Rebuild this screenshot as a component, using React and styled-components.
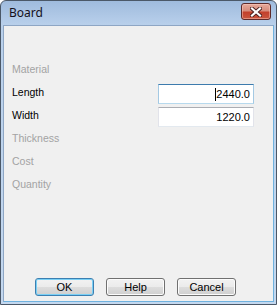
import React from 'react';
import styled, { createGlobalStyle } from 'styled-components';

const GlobalStyle = createGlobalStyle`
  html, body {
    margin: 0;
    padding: 0;
    background: #ffffff;
  }
`;

const Frame = styled.div`
  box-sizing: border-box;
  width: 277px;
  height: 305px;
  display: flex;
  flex-direction: column;
  border: 1px solid #4b5868;
  border-radius: 6px 6px 0 0;
  background: linear-gradient(to bottom, #9fbbdd 0px, #b9d0eb 24px, #c4d8ef 100%);
  padding: 0 2px 2px 2px;
  font-family: "Liberation Sans", Arial, sans-serif;
  font-size: 11px;
`;

const TitleBar = styled.div`
  height: 24px;
  display: flex;
  align-items: center;
  justify-content: space-between;
  padding: 0 3px 0 6px;
`;

const Title = styled.span`
  font-family: "Noto Sans", "Liberation Sans", sans-serif;
  font-size: 12px;
  color: #14101c;
  margin-top: -1px;
`;

const CloseButton = styled.div`
  box-sizing: border-box;
  width: 30px;
  height: 17px;
  margin-top: -3px;
  border: 1px solid #5d2a2a;
  border-radius: 3px;
  background: linear-gradient(to bottom, #e6a99b 0%, #d68c7c 45%, #c2402c 55%, #c9563f 100%);
  box-shadow: inset 0 0 0 1px rgba(255, 210, 200, 0.45);
  display: flex;
  align-items: center;
  justify-content: center;
`;

const Client = styled.div`
  flex: 1;
  display: flex;
  flex-direction: column;
  background: #f0f0f0;
  border: 1px solid #8ea6c4;
  border-bottom-color: #6fb2df;
  border-right-color: #6fb2df;
`;

const Fields = styled.div`
  display: grid;
  grid-template-columns: 146px 96px;
  grid-auto-rows: 23px;
  margin-top: 31px;
  padding-left: 8px;
`;

const Label = styled.div`
  display: flex;
  align-items: center;
  grid-column: 1;
  font-size: 10.5px;
  color: ${(p) => (p.$disabled ? '#a3a3a3' : '#000000')};
`;

const Input = styled.div`
  box-sizing: border-box;
  grid-column: 2;
  height: 20px;
  margin-top: 4px;
  display: flex;
  align-items: center;
  justify-content: flex-end;
  padding-right: 3px;
  background: #ffffff;
  color: #000000;
  border: 1px solid;
  border-color: ${(p) =>
    p.$focused ? '#3d7bad #a4c9e3 #b7d9ed #a4c9e3' : '#abadb3 #e2e3ea #e3e9ef #e2e3ea'};
`;

const Caret = styled.span`
  display: inline-block;
  width: 1px;
  height: 13px;
  background: #000000;
`;

const Spacer = styled.div`
  flex: 1;
`;

const ButtonRow = styled.div`
  display: flex;
  gap: 12px;
  padding: 0 0 5px 31px;
`;

const Button = styled.button`
  box-sizing: border-box;
  width: 59px;
  height: 18px;
  padding: 0;
  font-family: "Liberation Sans", Arial, sans-serif;
  font-size: 11px;
  color: #000000;
  border-radius: 3px;
  border: 1px solid ${(p) => (p.$default ? '#3c7fb1' : '#707070')};
  background: linear-gradient(to bottom, #f2f2f2 0%, #ebebeb 50%, #dddddd 51%, #cfcfcf 100%);
  box-shadow: inset 0 0 0 1px ${(p) => (p.$default ? '#7ad0f5' : '#fcfcfc')};
`;

const labels = [
  { text: 'Material', disabled: true },
  { text: 'Length', value: '2440.0', focused: true },
  { text: 'Width', value: '1220.0' },
  { text: 'Thickness', disabled: true },
  { text: 'Cost', disabled: true },
  { text: 'Quantity', disabled: true },
];

const CloseIcon = () => (
  <svg width="12" height="10" viewBox="0 0 12 10">
    <path d="M2 1.5 L10 8.5 M10 1.5 L2 8.5" stroke="#4a2020" strokeWidth="4" strokeLinecap="square" />
    <path d="M2 1.5 L10 8.5 M10 1.5 L2 8.5" stroke="#ffffff" strokeWidth="2.2" strokeLinecap="square" />
  </svg>
);

export default function App() {
  return (
    <>
      <GlobalStyle />
      <Frame>
        <TitleBar>
          <Title>Board</Title>
          <CloseButton>
            <CloseIcon />
          </CloseButton>
        </TitleBar>
        <Client>
          <Fields>
            {labels.map((l) => (
              <React.Fragment key={l.text}>
                <Label $disabled={l.disabled}>{l.text}</Label>
                {l.value ? (
                  <Input $focused={l.focused}>
                    {l.focused && <Caret />}
                    {l.value}
                  </Input>
                ) : null}
              </React.Fragment>
            ))}
          </Fields>
          <Spacer />
          <ButtonRow>
            <Button $default>OK</Button>
            <Button>Help</Button>
            <Button>Cancel</Button>
          </ButtonRow>
        </Client>
      </Frame>
    </>
  );
}
